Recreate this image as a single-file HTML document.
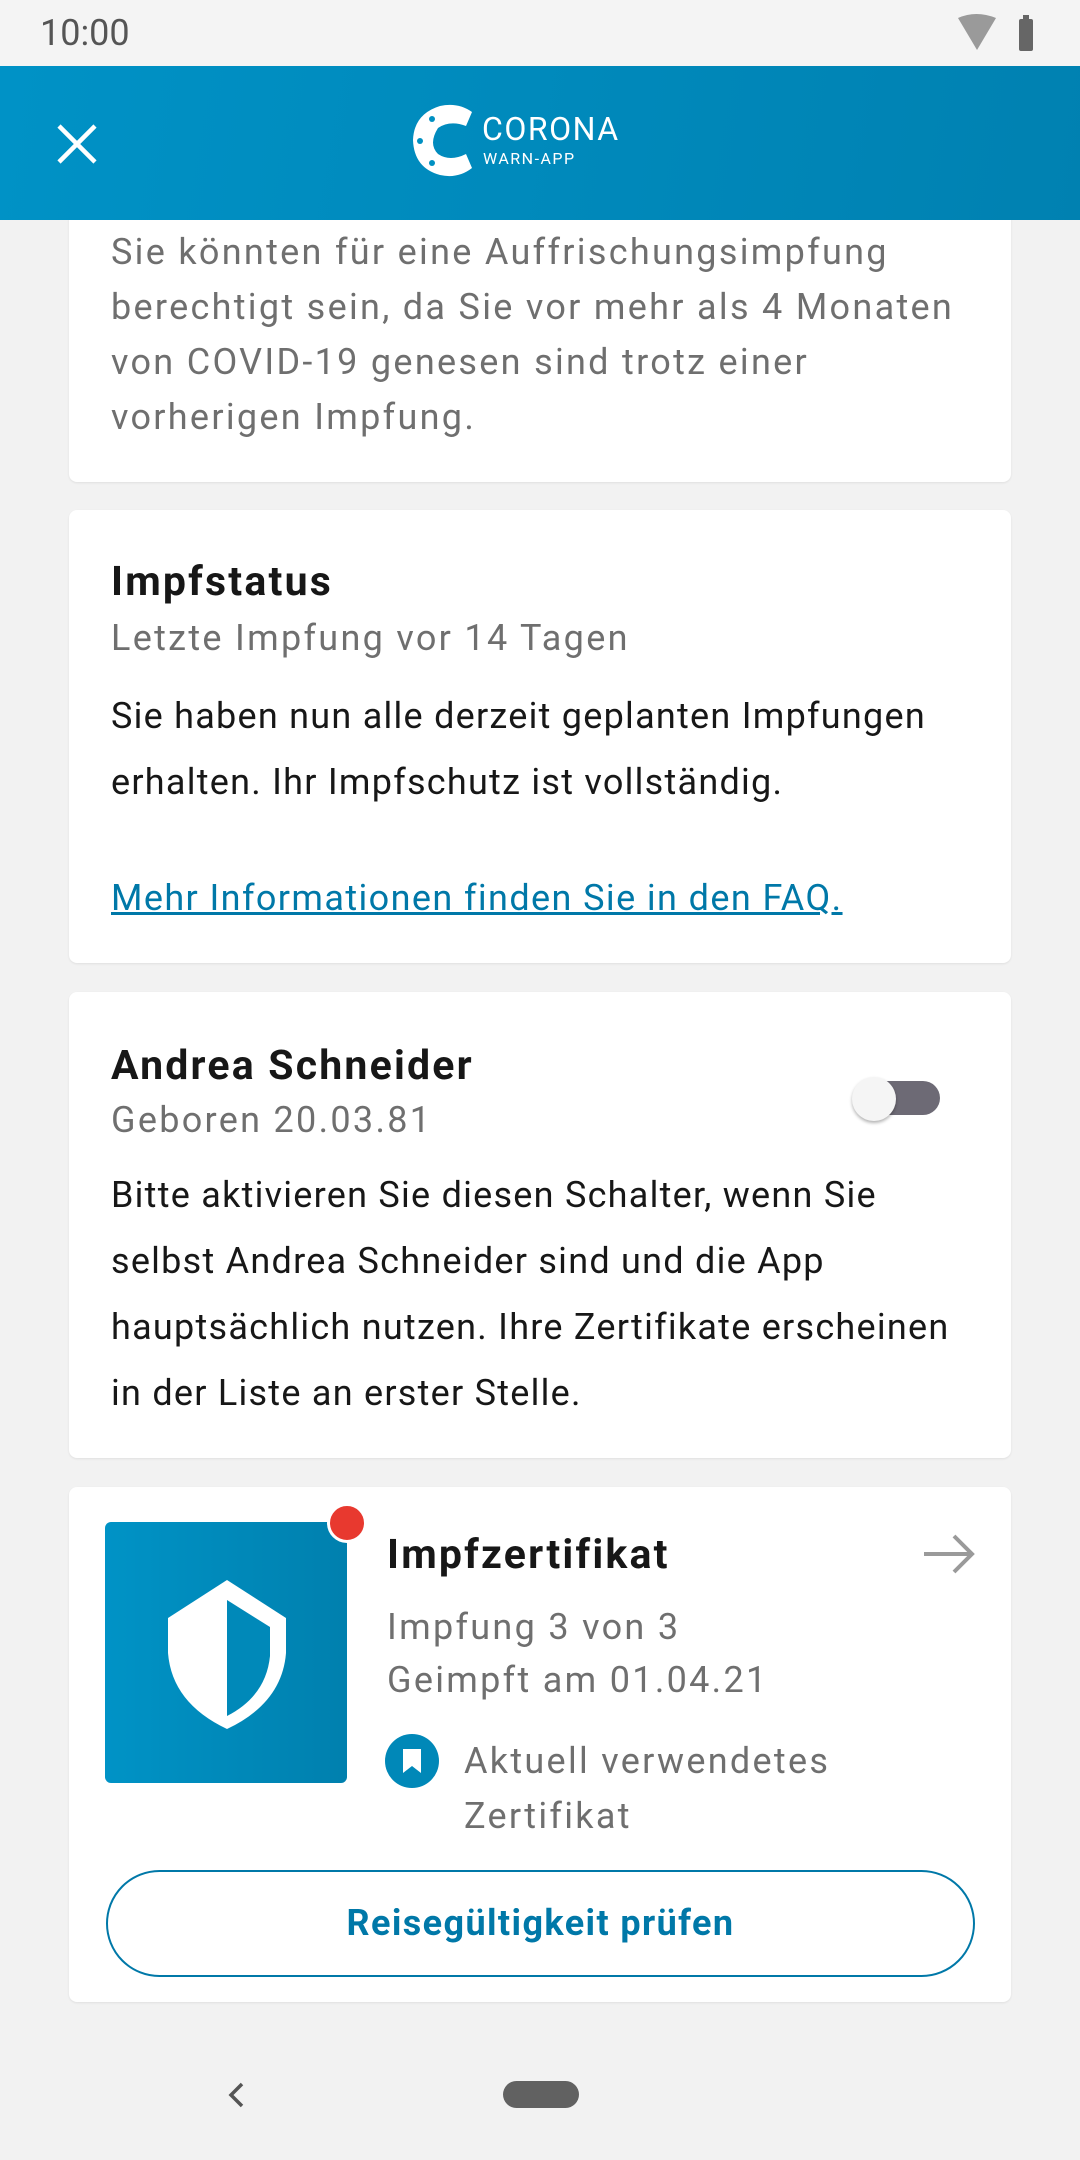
<!DOCTYPE html>
<html><head><meta charset="utf-8"><style>
*{margin:0;padding:0;box-sizing:border-box}
body{width:1080px;height:2160px;background:#f2f2f2;font-family:"Roboto","Liberation Sans",sans-serif;position:relative;overflow:hidden}
.a{position:absolute;white-space:nowrap}
.card{position:absolute;left:69px;width:942px;background:#fff;border-radius:8px;box-shadow:0 1px 2px rgba(0,0,0,.08)}
.g{color:#6f6f6f;font-size:36px;letter-spacing:2.3px}
.b{color:#171717;font-size:36px;letter-spacing:1.25px}
.t{color:#171717;font-size:41px;font-weight:bold;letter-spacing:2.2px}
</style></head><body>
<div class="a" style="left:0;top:0;width:1080px;height:66px;background:#f4f4f4"></div>
<div class="a" style="left:40px;top:12px;font-size:36px;color:#555">10:00</div>
<svg class="a" style="left:956px;top:14px" width="90" height="38"><path d="M2 4 Q20 -4 40 4 L21 36 Z" fill="#9a9a9a"/><rect x="63" y="5" width="14" height="32" rx="2" fill="#666"/><rect x="67" y="1" width="6" height="5" fill="#666"/></svg>

<div class="card" style="top:150px;height:332px"></div>
<div class="a" style="left:287px;top:200px;width:12px;height:12px;border-radius:50%;background:#e8392f"></div>
<div class="a g" style="left:111px;top:225px;line-height:55px">Sie könnten für eine Auffrischungsimpfung<br>berechtigt sein, da Sie vor mehr als 4 Monaten<br>von COVID-19 genesen sind trotz einer<br>vorherigen Impfung.</div>

<div class="a" style="left:0;top:66px;width:1080px;height:154px;background:linear-gradient(100deg,#0092c6,#0081b1)"></div>
<svg class="a" style="left:56px;top:123px" width="42" height="42"><path d="M3 3L39 39M39 3L3 39" stroke="#fff" stroke-width="4.5"/></svg>
<svg class="a" style="left:410px;top:104px" width="70" height="74"><path d="M62 8 Q48 -2 30 2 Q4 10 3 36 Q4 64 30 71 Q48 75 62 64 L56 50 Q40 58 28 50 Q18 40 28 24 Q40 16 56 22 Z" fill="#fff"/><g fill="#0090c2"><circle cx="22" cy="15" r="3"/><circle cx="10" cy="37" r="3"/><circle cx="22" cy="59" r="3"/></g></svg>
<div class="a" style="left:482px;top:110px;font-size:32px;color:#fff;letter-spacing:1.5px">CORONA</div>
<div class="a" style="left:483px;top:149px;font-size:16px;color:#fff;letter-spacing:1.5px">WARN-APP</div>

<div class="card" style="top:510px;height:453px"></div>
<div class="a t" style="left:111px;top:558px">Impfstatus</div>
<div class="a g" style="left:111px;top:617px">Letzte Impfung vor 14 Tagen</div>
<div class="a b" style="left:111px;top:683px;line-height:66px">Sie haben nun alle derzeit geplanten Impfungen<br>erhalten. Ihr Impfschutz ist vollständig.</div>
<div class="a" style="left:111px;top:877px;font-size:36px;color:#0078a8;text-decoration:underline;letter-spacing:1.4px">Mehr Informationen finden Sie in den FAQ.</div>

<div class="card" style="top:992px;height:466px"></div>
<div class="a t" style="left:111px;top:1042px">Andrea Schneider</div>
<div class="a g" style="left:111px;top:1099px">Geboren 20.03.81</div>
<div class="a" style="left:862px;top:1081px;width:78px;height:34px;border-radius:17px;background:#6d6a75"></div>
<div class="a" style="left:852px;top:1077px;width:44px;height:44px;border-radius:50%;background:#f5f5f5;box-shadow:0 2px 3px rgba(0,0,0,.3)"></div>
<div class="a b" style="left:111px;top:1162px;line-height:66px">Bitte aktivieren Sie diesen Schalter, wenn Sie<br>selbst Andrea Schneider sind und die App<br>hauptsächlich nutzen. Ihre Zertifikate erscheinen<br>in der Liste an erster Stelle.</div>

<div class="card" style="top:1487px;height:515px"></div>
<div class="a" style="left:105px;top:1522px;width:242px;height:261px;border-radius:6px;background:linear-gradient(90deg,#0093c6,#0080ae)"></div>
<svg class="a" style="left:166px;top:1578px" width="122" height="153"><path d="M61 2 L120 40 L120 75 Q116 125 61 151 Q6 125 2 75 L2 40 Z" fill="#fff"/><path d="M61 22 L104 49 L104 78 Q100 118 61 138 Z" fill="#0089b9"/></svg>
<div class="a" style="left:327px;top:1503px;width:40px;height:40px;border-radius:50%;background:#e8392f;border:3px solid #fff"></div>
<div class="a t" style="left:387px;top:1531px">Impfzertifikat</div>
<svg class="a" style="left:922px;top:1533px" width="54" height="42"><path d="M2 21H50M32 3L50 21L32 39" stroke="#9a9a9a" stroke-width="4" fill="none"/></svg>
<div class="a g" style="left:387px;top:1606px">Impfung 3 von 3</div>
<div class="a g" style="left:387px;top:1659px">Geimpft am 01.04.21</div>
<div class="a" style="left:385px;top:1734px;width:54px;height:54px;border-radius:50%;background:#0088b8"></div>
<svg class="a" style="left:400px;top:1747px" width="24" height="28"><path d="M3 2H21V26L12 19L3 26Z" fill="#fff"/></svg>
<div class="a g" style="left:464px;top:1734px;line-height:55px">Aktuell verwendetes<br>Zertifikat</div>
<div class="a" style="left:106px;top:1870px;width:869px;height:107px;border:2.5px solid #0078a8;border-radius:54px;text-align:center;line-height:102px;font-size:36px;font-weight:bold;color:#0078a8;letter-spacing:1.4px">Reisegültigkeit prüfen</div>

<svg class="a" style="left:224px;top:2080px" width="24" height="30"><path d="M18 4L7 15L18 26" stroke="#555" stroke-width="3.5" fill="none"/></svg>
<div class="a" style="left:503px;top:2081px;width:76px;height:27px;border-radius:14px;background:#616161"></div>
</body></html>
